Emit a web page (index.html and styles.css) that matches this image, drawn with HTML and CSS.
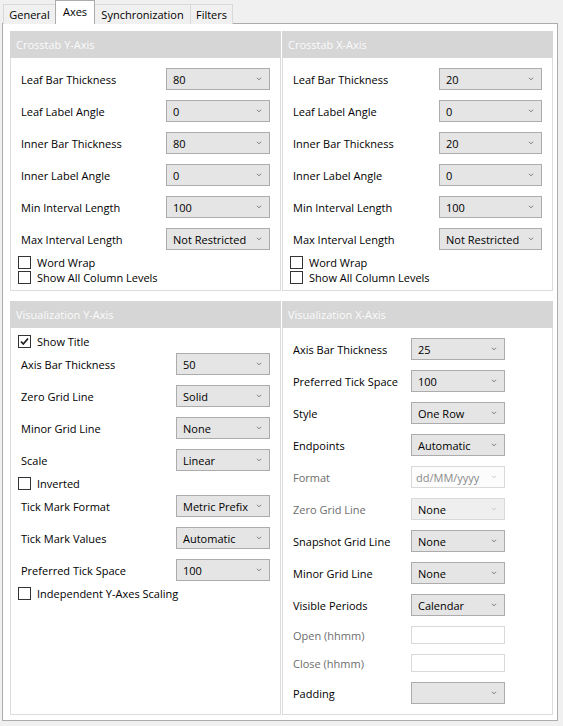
FILE: index.html
```html
<!DOCTYPE html>
<html>
<head>
<meta charset="utf-8">
<link rel="stylesheet" href="styles.css">
</head>
<body>
<div class="tabs">
  <div class="tab t-gen">General</div>
  <div class="tab active t-axes">Axes</div>
  <div class="tab t-sync">Synchronization</div>
  <div class="tab t-filt">Filters</div>
</div>
<div class="content">
  <div class="grid">
    <section class="panel cy">
      <div class="ph">Crosstab Y-Axis</div>
      <div class="pb">
        <div class="row"><span class="lbl">Leaf Bar Thickness</span><div class="dd"><span>80</span><svg class="chev" viewBox="0 0 7 5"><path d="M1 1L3.5 3.5L6 1"/></svg></div></div>
        <div class="row"><span class="lbl">Leaf Label Angle</span><div class="dd"><span>0</span><svg class="chev" viewBox="0 0 7 5"><path d="M1 1L3.5 3.5L6 1"/></svg></div></div>
        <div class="row"><span class="lbl">Inner Bar Thickness</span><div class="dd"><span>80</span><svg class="chev" viewBox="0 0 7 5"><path d="M1 1L3.5 3.5L6 1"/></svg></div></div>
        <div class="row"><span class="lbl">Inner Label Angle</span><div class="dd"><span>0</span><svg class="chev" viewBox="0 0 7 5"><path d="M1 1L3.5 3.5L6 1"/></svg></div></div>
        <div class="row"><span class="lbl">Min Interval Length</span><div class="dd"><span>100</span><svg class="chev" viewBox="0 0 7 5"><path d="M1 1L3.5 3.5L6 1"/></svg></div></div>
        <div class="row"><span class="lbl">Max Interval Length</span><div class="dd"><span>Not Restricted</span><svg class="chev" viewBox="0 0 7 5"><path d="M1 1L3.5 3.5L6 1"/></svg></div></div>
        <div class="cb"><span class="box"></span>Word Wrap</div>
        <div class="cb"><span class="box"></span>Show All Column Levels</div>
      </div>
    </section>
    <section class="panel cx">
      <div class="ph">Crosstab X-Axis</div>
      <div class="pb">
        <div class="row"><span class="lbl">Leaf Bar Thickness</span><div class="dd"><span>20</span><svg class="chev" viewBox="0 0 7 5"><path d="M1 1L3.5 3.5L6 1"/></svg></div></div>
        <div class="row"><span class="lbl">Leaf Label Angle</span><div class="dd"><span>0</span><svg class="chev" viewBox="0 0 7 5"><path d="M1 1L3.5 3.5L6 1"/></svg></div></div>
        <div class="row"><span class="lbl">Inner Bar Thickness</span><div class="dd"><span>20</span><svg class="chev" viewBox="0 0 7 5"><path d="M1 1L3.5 3.5L6 1"/></svg></div></div>
        <div class="row"><span class="lbl">Inner Label Angle</span><div class="dd"><span>0</span><svg class="chev" viewBox="0 0 7 5"><path d="M1 1L3.5 3.5L6 1"/></svg></div></div>
        <div class="row"><span class="lbl">Min Interval Length</span><div class="dd"><span>100</span><svg class="chev" viewBox="0 0 7 5"><path d="M1 1L3.5 3.5L6 1"/></svg></div></div>
        <div class="row"><span class="lbl">Max Interval Length</span><div class="dd"><span>Not Restricted</span><svg class="chev" viewBox="0 0 7 5"><path d="M1 1L3.5 3.5L6 1"/></svg></div></div>
        <div class="cb"><span class="box"></span>Word Wrap</div>
        <div class="cb"><span class="box"></span>Show All Column Levels</div>
      </div>
    </section>
    <section class="panel vy">
      <div class="ph">Visualization Y-Axis</div>
      <div class="pb">
        <div class="cb"><span class="box checked"><svg viewBox="0 0 11 11"><path d="M2 5.5L4.3 8L9 2.5"/></svg></span>Show Title</div>
        <div class="row"><span class="lbl">Axis Bar Thickness</span><div class="dd"><span>50</span><svg class="chev" viewBox="0 0 7 5"><path d="M1 1L3.5 3.5L6 1"/></svg></div></div>
        <div class="row"><span class="lbl">Zero Grid Line</span><div class="dd"><span>Solid</span><svg class="chev" viewBox="0 0 7 5"><path d="M1 1L3.5 3.5L6 1"/></svg></div></div>
        <div class="row"><span class="lbl">Minor Grid Line</span><div class="dd"><span>None</span><svg class="chev" viewBox="0 0 7 5"><path d="M1 1L3.5 3.5L6 1"/></svg></div></div>
        <div class="row"><span class="lbl">Scale</span><div class="dd"><span>Linear</span><svg class="chev" viewBox="0 0 7 5"><path d="M1 1L3.5 3.5L6 1"/></svg></div></div>
        <div class="cb"><span class="box"></span>Inverted</div>
        <div class="row"><span class="lbl">Tick Mark Format</span><div class="dd"><span>Metric Prefix</span><svg class="chev" viewBox="0 0 7 5"><path d="M1 1L3.5 3.5L6 1"/></svg></div></div>
        <div class="row"><span class="lbl">Tick Mark Values</span><div class="dd"><span>Automatic</span><svg class="chev" viewBox="0 0 7 5"><path d="M1 1L3.5 3.5L6 1"/></svg></div></div>
        <div class="row"><span class="lbl">Preferred Tick Space</span><div class="dd"><span>100</span><svg class="chev" viewBox="0 0 7 5"><path d="M1 1L3.5 3.5L6 1"/></svg></div></div>
        <div class="cb"><span class="box"></span>Independent Y-Axes Scaling</div>
      </div>
    </section>
    <section class="panel vx">
      <div class="ph">Visualization X-Axis</div>
      <div class="pb">
        <div class="row"><span class="lbl">Axis Bar Thickness</span><div class="dd"><span>25</span><svg class="chev" viewBox="0 0 7 5"><path d="M1 1L3.5 3.5L6 1"/></svg></div></div>
        <div class="row"><span class="lbl">Preferred Tick Space</span><div class="dd"><span>100</span><svg class="chev" viewBox="0 0 7 5"><path d="M1 1L3.5 3.5L6 1"/></svg></div></div>
        <div class="row"><span class="lbl">Style</span><div class="dd"><span>One Row</span><svg class="chev" viewBox="0 0 7 5"><path d="M1 1L3.5 3.5L6 1"/></svg></div></div>
        <div class="row"><span class="lbl">Endpoints</span><div class="dd"><span>Automatic</span><svg class="chev" viewBox="0 0 7 5"><path d="M1 1L3.5 3.5L6 1"/></svg></div></div>
        <div class="row"><span class="lbl off">Format</span><div class="dd edit-off"><span>dd/MM/yyyy</span><svg class="chev" viewBox="0 0 7 5"><path d="M1 1L3.5 3.5L6 1"/></svg></div></div>
        <div class="row"><span class="lbl off">Zero Grid Line</span><div class="dd off"><span>None</span><svg class="chev" viewBox="0 0 7 5"><path d="M1 1L3.5 3.5L6 1"/></svg></div></div>
        <div class="row"><span class="lbl">Snapshot Grid Line</span><div class="dd"><span>None</span><svg class="chev" viewBox="0 0 7 5"><path d="M1 1L3.5 3.5L6 1"/></svg></div></div>
        <div class="row"><span class="lbl">Minor Grid Line</span><div class="dd"><span>None</span><svg class="chev" viewBox="0 0 7 5"><path d="M1 1L3.5 3.5L6 1"/></svg></div></div>
        <div class="row"><span class="lbl">Visible Periods</span><div class="dd"><span>Calendar</span><svg class="chev" viewBox="0 0 7 5"><path d="M1 1L3.5 3.5L6 1"/></svg></div></div>
        <div class="row trow"><span class="lbl off">Open (hhmm)</span><div class="tb"></div></div>
        <div class="row trow"><span class="lbl off">Close (hhmm)</span><div class="tb"></div></div>
        <div class="row"><span class="lbl">Padding</span><div class="dd"><span></span><svg class="chev" viewBox="0 0 7 5"><path d="M1 1L3.5 3.5L6 1"/></svg></div></div>
      </div>
    </section>
  </div>
</div>
</body>
</html>
```
FILE: styles.css
```css
html, body {
  margin: 0;
  padding: 0;
}
body {
  background: #f0f0f0;
  font-family: "Open Sans", "Noto Sans", sans-serif;
  font-size: 11px;
  color: #000;
  width: 563px;
  height: 726px;
  overflow: hidden;
}
.tabs {
  display: flex;
  align-items: flex-end;
  height: 24px;
  padding-left: 3px;
  box-sizing: border-box;
}
.tab {
  height: 20px;
  line-height: 19px;
  box-sizing: border-box;
  border: 1px solid #d9d9d9;
  border-bottom: none;
  background: #f0f0f0;
  text-align: center;
  white-space: nowrap;
}
.t-gen { width: 53px; }
.t-axes { width: 40px; margin-left: -1px; }
.t-sync { width: 97px; margin-left: -1px; }
.t-filt { width: 43px; margin-left: -1px; }
.tab.active {
  height: 24px;
  line-height: 22px;
  background: #fff;
  border-color: #acacac;
  position: relative;
  z-index: 1;
}
.content {
  margin: -1px 0 0 2px;
  width: 556px;
  height: 698px;
  box-sizing: border-box;
  border: 1px solid #acacac;
  background: #fff;
  padding: 7px 0 0 7px;
}
.grid {
  display: grid;
  grid-template-columns: 271px 271px;
  grid-template-rows: auto auto;
  column-gap: 1px;
  row-gap: 10px;
}
.panel {
  display: flex;
  flex-direction: column;
}
.ph {
  height: 27px;
  line-height: 27px;
  background: #d6d6d6;
  color: #fbfbfb;
  padding-left: 6px;
  font-size: 11px;
}
.pb {
  flex: 1;
  border: 1px solid #dcdcdc;
  border-top: none;
  padding: 5px 0 5px 6px;
}
.vy .pb { padding-top: 6px; }
.row {
  height: 32px;
  display: flex;
  align-items: center;
}
.lbl {
  margin-left: 4px;
  white-space: nowrap;
}
.lbl.off { color: #6d6d6d; }
.cy .lbl { width: 145px; }
.cx .lbl { width: 146px; }
.vy .lbl { width: 155px; }
.vx .lbl { width: 118px; }
.dd {
  height: 22px;
  box-sizing: border-box;
  border: 1px solid #acacac;
  background: #e5e5e5;
  display: flex;
  align-items: center;
  justify-content: space-between;
  padding: 0 7px 0 6px;
  white-space: nowrap;
}
.cy .dd { width: 104px; }
.cx .dd { width: 103px; }
.vy .dd, .vx .dd { width: 94px; }
.dd.off {
  background: #efefef;
  border-color: #d9d9d9;
}
.dd.edit-off {
  background: #fcfcfc;
  border-color: #d9d9d9;
  color: #8a8a8a;
  padding-left: 4px;
}
.chev {
  width: 6px;
  height: 4px;
  fill: none;
  stroke: #6a6a6a;
  stroke-width: 1.1;
  flex: none;
}
.dd.off .chev, .dd.edit-off .chev { stroke: #c4c4c4; }
.trow { height: 28px; }
.tb {
  width: 94px;
  height: 18px;
  box-sizing: border-box;
  border: 1px solid #d9d9d9;
  background: #fff;
}
.cb {
  height: 14px;
  display: flex;
  align-items: center;
  white-space: nowrap;
}
.cy .cb, .cx .cb { height: 15px; }
.cy .pb, .cx .pb { padding-bottom: 5px; }
.box {
  width: 13px;
  height: 13px;
  box-sizing: border-box;
  border: 1px solid #333;
  background: #fff;
  margin: 0 6px 0 1px;
  display: flex;
  align-items: center;
  justify-content: center;
  flex: none;
}
.box svg {
  width: 11px;
  height: 11px;
  fill: none;
  stroke: #222;
  stroke-width: 1.8;
}
```
